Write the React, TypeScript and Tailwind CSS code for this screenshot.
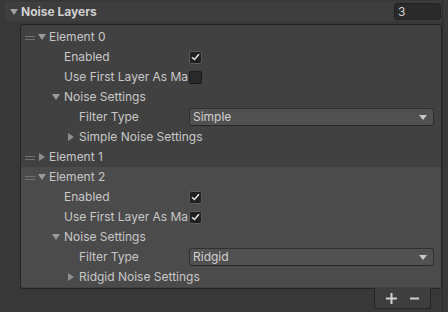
import React from "react";

const Down = ({ c = "#9a9a9a" }: { c?: string }) => (
  <svg width="8" height="6" viewBox="0 0 8 6"><path d="M0 0H8L4 6Z" fill={c} /></svg>
);
const Right = () => (
  <svg width="6" height="8" viewBox="0 0 6 8"><path d="M0 0L6 4L0 8Z" fill="#8e8e8e" /></svg>
);

const Check = ({ on }: { on: boolean }) => (
  <div
    className={
      "w-[13px] h-[13px] rounded-[2px] border flex items-center justify-center " +
      (on ? "bg-[#202020] border-[#5a5a5a]" : "bg-[#2a2a2a] border-[#1b1b1b]")
    }
  >
    {on && (
      <svg width="9" height="8" viewBox="0 0 9 8">
        <path d="M1 4.2L3.4 6.5L8 1.2" stroke="#e4e4e4" strokeWidth="1.5" fill="none" />
      </svg>
    )}
  </div>
);

const Dropdown = ({ v }: { v: string }) => (
  <div className="h-[18px] w-full bg-[#515151] border border-[#303030] border-b-[#262626] rounded-[3px] flex items-center pl-[3px] pr-[6px]">
    <span className="flex-1 leading-none text-[#d0d0d0]">{v}</span>
    <svg width="8" height="5" viewBox="0 0 8 5"><path d="M0 0H8L4 5Z" fill="#c8c8c8" /></svg>
  </div>
);

type RowProps = {
  pl: number;
  tri?: "down" | "right";
  label: string;
  field?: React.ReactNode;
};

const Row = ({ pl, tri, label, field }: RowProps) => (
  <div className="h-[20px] flex items-center">
    <div
      className={(field ? "w-[168px] " : "") + "flex items-center shrink-0 whitespace-nowrap"}
      style={{ paddingLeft: pl }}
    >
      {tri && (
        <div className="w-[15px] shrink-0 flex items-center justify-center pr-[2px]">
          {tri === "down" ? <Down /> : <Right />}
        </div>
      )}
      <span>{label}</span>
    </div>
    {field && <div className="flex-1 mr-[7px] flex items-center">{field}</div>}
  </div>
);

const ElementHead = ({ label, open }: { label: string; open: boolean }) => (
  <div className="h-[20px] flex items-center pl-[4px]">
    <div className="w-[10px] flex flex-col gap-[2px] mt-[1px]">
      <div className="h-[1px] bg-[#707070]" />
      <div className="h-[1px] bg-[#707070]" />
    </div>
    <div className="w-[14px] flex items-center justify-center">
      {open ? <Down /> : <Right />}
    </div>
    <span>{label}</span>
  </div>
);

const ElementBody = ({ use, filter }: { use: boolean; filter: string }) => (
  <>
    <Row pl={43} label="Enabled" field={<Check on />} />
    <Row pl={43} label="Use First Layer As Ma" field={<Check on={use} />} />
    <Row pl={28} tri="down" label="Noise Settings" />
    <Row pl={58} label="Filter Type" field={<Dropdown v={filter} />} />
    <Row pl={43} tri="right" label={`${filter} Noise Settings`} />
  </>
);

export default function App() {
  return (
    <div
      className="w-[448px] h-[312px] bg-[#383838] flex overflow-hidden text-[12px] text-[#c8c8c8]"
      style={{ fontFamily: "Inter, 'Noto Sans', sans-serif" }}
    >
      <div className="w-[442px] flex flex-col">
        <div className="mt-[2px] ml-[5px] mr-[1px] h-[19px] bg-[#3e3e3e] flex items-center">
          <div className="w-[16px] flex items-center justify-center pl-[2px]">
            <Down c="#a0a0a0" />
          </div>
          <span className="font-bold text-[#d0d0d0] flex-1">Noise Layers</span>
          <div className="w-[47px] h-[17px] bg-[#2a2a2a] border border-[#212121] rounded-[3px] flex items-center pl-[3px] text-[#d0d0d0]">
            3
          </div>
        </div>
        <div className="mt-[3px] ml-[20px] bg-[#414141] border border-[#242424] rounded-[3px] pt-[2px] pb-[1px]">
          <ElementHead label="Element 0" open />
          <ElementBody use={false} filter="Simple" />
          <ElementHead label="Element 1" open={false} />
          <div className="bg-[#4b4b4b]">
            <ElementHead label="Element 2" open />
            <ElementBody use filter="Ridgid" />
          </div>
        </div>
        <div className="self-end mr-[11px] w-[57px] h-[21px] -mt-[1px] bg-[#3e3e3e] border border-[#242424] border-t-0 rounded-b-[3px] flex items-center justify-around px-[5px]">
          <svg width="11" height="11" viewBox="0 0 11 11"><path d="M5.5 0V11M0 5.5H11" stroke="#d0d0d0" strokeWidth="2" /></svg>
          <svg width="9" height="11" viewBox="0 0 9 11"><path d="M0 5.5H9" stroke="#d0d0d0" strokeWidth="2" /></svg>
        </div>
      </div>
      <div className="flex-1 bg-[#393939] border-l border-[#2c2c2c]" />
    </div>
  );
}
